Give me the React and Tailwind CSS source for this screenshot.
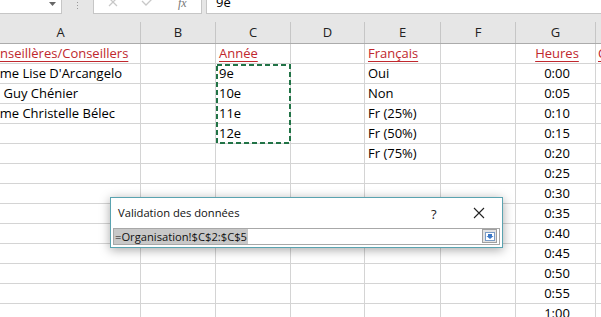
import React from "react";

const times = ["0:00","0:05","0:10","0:15","0:20","0:25","0:30","0:35","0:40","0:45","0:50","0:55","1:00"];

const colA = [
  ["Mme Lise D'Arcangelo", "ml-[7px]"],
  ["M. Guy Chénier", "ml-[4px]"],
  ["Mme Christelle Bélec", "ml-[7px]"],
];
const colC = ["9e", "10e", "11e", "12e"];
const colE = ["Oui", "Non", "Fr (25%)", "Fr (50%)", "Fr (75%)"];

function Cell({ w, children, align = "left", pad = "pl-[3px]", extra = "" }) {
  const a = align === "center" ? "justify-center" : "justify-start";
  return (
    <div className={`h-full shrink-0 border-r border-[#d4d4d4] flex items-center overflow-hidden whitespace-nowrap ${a} ${pad} ${extra}`} style={{ width: w }}>
      {children}
    </div>
  );
}

const RED = "text-[#c0272d] underline underline-offset-[3px] decoration-1";

export default function App() {
  const rows = [];
  rows.push(
    <div key="r1" className="flex h-[20px] border-b border-[#d4d4d4]">
      <Cell w={160} pad="pl-0"><span className={`${RED} ml-[3px]`}>Conseillères/Conseillers</span></Cell>
      <Cell w={75} />
      <Cell w={75}><span className={RED}>Année</span></Cell>
      <Cell w={74} />
      <Cell w={76}><span className={RED}>Français</span></Cell>
      <Cell w={75} />
      <Cell w={80} align="center"><span className={RED}>Heures</span></Cell>
      <div className="flex-1 h-full flex items-center pl-[2px] overflow-hidden"><span className={RED}>Commentaires</span></div>
    </div>
  );
  for (let i = 0; i < 13; i++) {
    const a = colA[i];
    rows.push(
      <div key={i} className="flex h-[20px] border-b border-[#d4d4d4]">
        <Cell w={160} pad="pl-0">{a ? <span className={a[1]}>{a[0]}</span> : null}</Cell>
        <Cell w={75} />
        <Cell w={75}>{colC[i] || ""}</Cell>
        <Cell w={74} />
        <Cell w={76}>{colE[i] || ""}</Cell>
        <Cell w={75} />
        <Cell w={80} align="center">{times[i]}</Cell>
        <div className="flex-1 h-full" />
      </div>
    );
  }

  return (
    <div className="relative w-[601px] h-[317px] overflow-hidden bg-white text-black" style={{ fontFamily: "'Open Sans', 'Noto Sans', sans-serif" }}>
      {/* formula bar */}
      <div className="h-[22px] bg-[#e6e6e6] flex items-start">
        <div className="w-[62px] h-[14px] bg-white border-r border-b border-[#c6c6c6] relative">
          <svg className="absolute left-[49px] top-[2px]" width="7" height="4" viewBox="0 0 7 4"><path d="M0 0 L7 0 L3.5 4 Z" fill="#666" /></svg>
        </div>
        <div className="w-[31px] h-[14px] flex justify-center">
          <svg width="3" height="10" viewBox="0 0 3 10"><rect x="1" y="2" width="1" height="1" fill="#999"/><rect x="1" y="5" width="1" height="1" fill="#999"/><rect x="1" y="8" width="1" height="1" fill="#999"/></svg>
        </div>
        <div className="w-[109px] h-[14px] bg-white border-l border-r border-b border-[#c6c6c6] relative">
          <svg className="absolute left-[14px] top-0" width="12" height="8" viewBox="0 0 12 8"><path d="M1 -2 L9 6 M9 -2 L1 6" stroke="#c8c8c8" strokeWidth="1.3" fill="none"/></svg>
          <svg className="absolute left-[47px] top-0" width="14" height="8" viewBox="0 0 14 8"><path d="M1 1 L5 5 L12 -2" stroke="#c8c8c8" strokeWidth="1.3" fill="none"/></svg>
          <span className="absolute left-[84px] -top-[6px] text-[12px] italic text-[#777]" style={{ fontFamily: "'Liberation Serif', serif" }}>fx</span>
        </div>
        <div className="w-[4px]" />
        <div className="flex-1 h-[14px] bg-white border-l border-b border-[#c6c6c6] relative">
          <span className="absolute left-[9px] -top-[7px] text-[13px]">9e</span>
        </div>
      </div>
      {/* column headers */}
      <div className="flex h-[22px] bg-[#e6e6e6] border-b border-[#ababab] text-[13px] text-[#222]">
        {[["A",160],["B",75],["C",75],["D",74],["E",76],["F",75],["G",80]].map(([l,w]) => (
          <div key={l} className="h-full shrink-0 border-r border-[#c6c6c6] flex items-center justify-center" style={{ width: w, marginLeft: l === "A" ? -19 : 0 }}>{l}</div>
        ))}
        <div className="flex-1" />
      </div>
      {/* grid */}
      <div className="-ml-[19px] text-[13px]">
        {rows}
      </div>

      {/* copy marquee */}
      <svg className="absolute left-[216px] top-[64px]" width="75" height="80" viewBox="0 0 75 80">
        <rect x="1" y="1" width="73" height="78" fill="none" stroke="#217346" strokeWidth="2" strokeDasharray="5 3" />
      </svg>

      {/* dialog */}
      <div className="absolute left-[110px] top-[197px] w-[393px] h-[51px] bg-white border border-[#5aa3b0] shadow-[0_2px_10px_rgba(0,0,0,0.35)]">
        <div className="h-[30px] flex items-center relative">
          <span className="pl-[7px] text-[11.2px] text-[#111]">Validation des données</span>
          <span className="absolute left-[320px] top-[7px] text-[13px] text-[#222]">?</span>
          <svg className="absolute left-[362px] top-[9px]" width="12" height="12" viewBox="0 0 12 12"><path d="M1 1 L11 11 M11 1 L1 11" stroke="#222" strokeWidth="1.1" fill="none"/></svg>
        </div>
        <div className="mx-[2px] h-[17px] border border-[#a8a8a8] bg-white flex items-center relative">
          <span className="bg-[#c8c8c8] text-[11.2px] leading-[15px] pl-[1px] pr-[1px] text-[#111]">=Organisation!$C$2:$C$5</span>
          <div className="absolute right-[2px] top-[0px] w-[15px] h-[14px] bg-[#e3e3e3] border border-[#a0a0a0] flex items-center justify-center">
            <svg width="10" height="9" viewBox="0 0 10 9">
              <rect x="0.5" y="0.5" width="9" height="8" fill="#fff" stroke="#7a9cc6" strokeWidth="1"/>
              <path d="M3 2 L7 2 L7 4 L8.5 4 L5 7 L1.5 4 L3 4 Z" fill="#3a78c8"/>
            </svg>
          </div>
        </div>
      </div>
    </div>
  );
}
